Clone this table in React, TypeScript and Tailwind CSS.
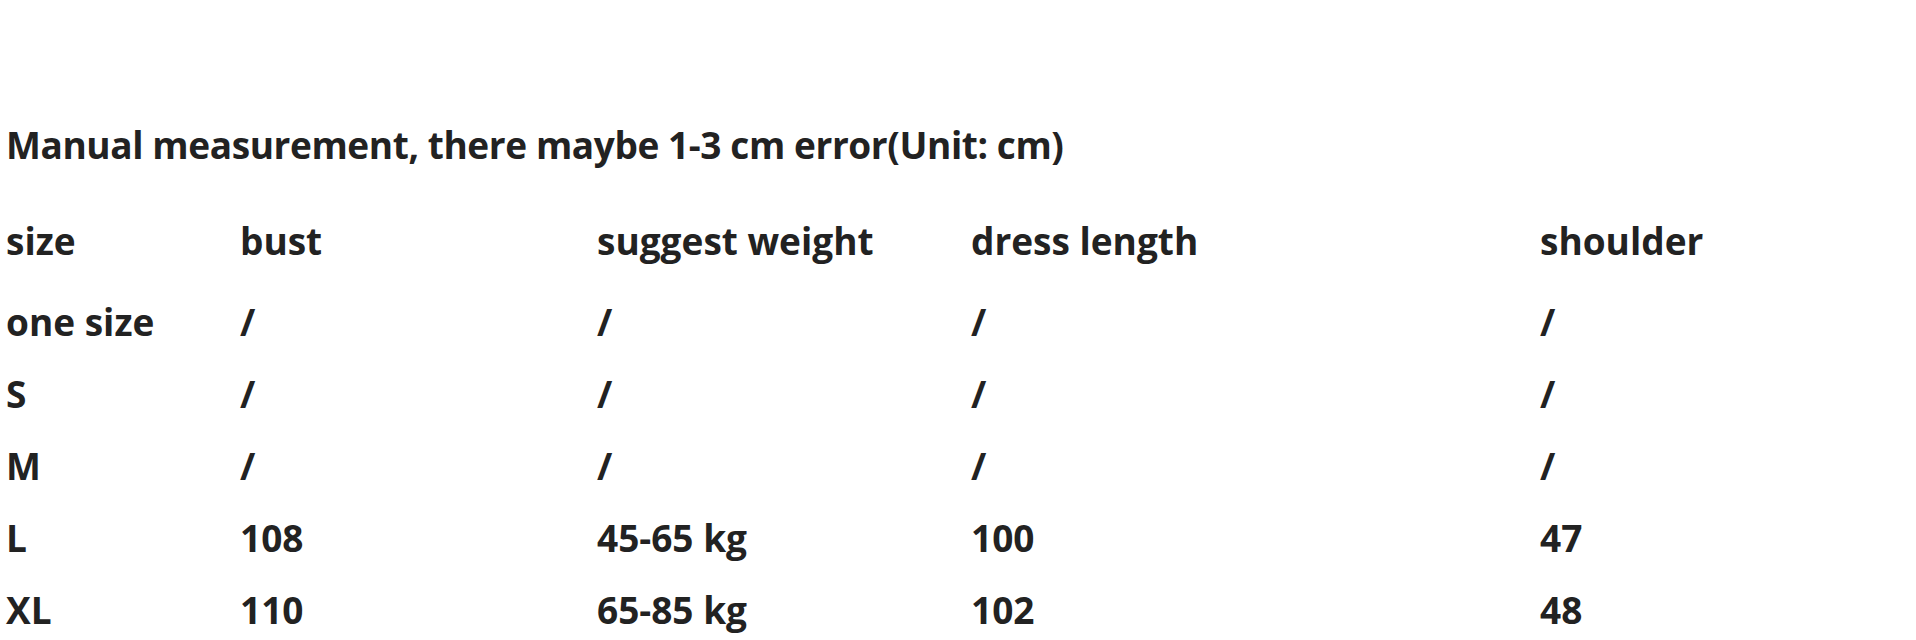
const header = ["size", "bust", "suggest weight", "dress length", "shoulder"];

const rows = [
  ["one size", "/", "/", "/", "/"],
  ["S", "/", "/", "/", "/"],
  ["M", "/", "/", "/", "/"],
  ["L", "108", "45-65 kg", "100", "47"],
  ["XL", "110", "65-85 kg", "102", "48"],
];

const widths = ["w-[234px]", "w-[357px]", "w-[374px]", "w-[569px]", "flex-1"];

const Row = ({ cells, className }: { cells: string[]; className?: string }) => (
  <div className={`flex leading-[44px] ${className ?? ""}`}>
    {cells.map((c, i) => (
      <div key={i} className={`${widths[i]} whitespace-nowrap`}>
        {c}
      </div>
    ))}
  </div>
);

export default function App() {
  return (
    <div
      className="w-[1916px] h-[640px] bg-white pl-[6px] pt-[123px] text-[37px] font-bold text-[#222222] overflow-hidden"
      style={{ fontFamily: '"Open Sans", sans-serif' }}
    >
      <h1 className="leading-[44px] whitespace-nowrap tracking-[-0.4px]">
        Manual measurement, there maybe 1-3 cm error(Unit: cm)
      </h1>

      {/* size table */}
      <Row cells={header} className="mt-[52px]" />
      <div className="mt-[37px] flex flex-col gap-[28px]">
        {rows.map((r) => (
          <Row key={r[0]} cells={r} />
        ))}
      </div>
    </div>
  );
}
